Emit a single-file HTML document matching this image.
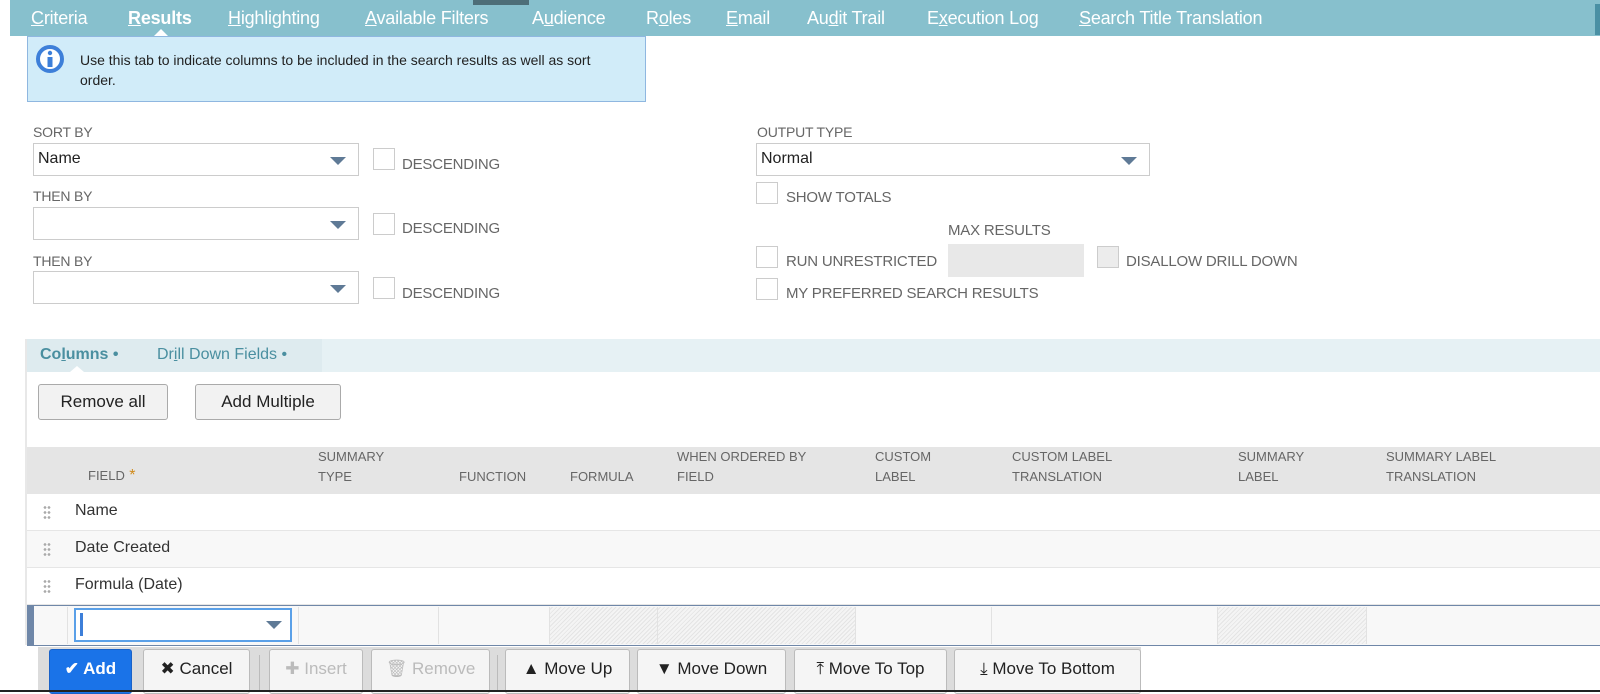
<!DOCTYPE html>
<html><head><meta charset="utf-8"><style>
*{box-sizing:border-box;margin:0;padding:0}
body{width:1600px;height:692px;overflow:hidden;background:#fff;font-family:"Liberation Sans",sans-serif;position:relative;color:#333}
.a{position:absolute}
.nav{left:10px;top:0;width:1590px;height:36px;background:#87c0cd}
.nav span{position:absolute;top:8px;font-size:18px;color:#fff;letter-spacing:-0.2px}
.nav u{text-decoration:underline}
.lbl{position:absolute;font-size:14px;color:#666;letter-spacing:-0.2px}
.sel{position:absolute;border:1px solid #ccc;background:#fff;height:33px;font-size:16px;color:#222;padding:6px 4px}
.tri{position:absolute;right:12px;top:13px;width:0;height:0;border-left:8px solid transparent;border-right:8px solid transparent;border-top:8px solid #5f7a96}
.cb{position:absolute;width:22px;height:22px;border:1px solid #ccc;background:#fff}
.btn{position:absolute;border:1px solid #aaa;border-radius:3px;background:#f2f2f2;font-size:17px;color:#222;text-align:center;line-height:33px}
.th{position:absolute;font-size:13px;color:#666;line-height:20px}
.row{position:absolute;left:27px;width:1573px;height:37px;border-bottom:1px solid #e6e6e6}
.row span{position:absolute;left:48px;top:8px;font-size:16px;color:#333}
.grip{position:absolute;left:16px;top:11px;width:8px;height:14px;background:radial-gradient(circle,#aaa 1.2px,transparent 1.5px) 0 0/4px 5px}
.tb{position:absolute;top:649px;height:45px;border:1px solid #bbb;border-radius:3px;background:#f5f5f5;font-size:17px;color:#222;line-height:38px;text-align:center}
.hatch{position:absolute;top:607px;height:37px;background:repeating-linear-gradient(135deg,#f4f4f4 0 2px,#e4e4e4 2px 3px)}
.vl{position:absolute;top:607px;height:37px;width:1px;background:#e2e2e2}
</style></head><body>
<div class="a nav">
<span style="left:21px"><u>C</u>riteria</span>
<span style="left:118px;font-weight:bold"><u>R</u>esults</span>
<span style="left:218px"><u>H</u>ighlighting</span>
<span style="left:355px"><u>A</u>vailable Filters</span>
<span style="left:522px">A<u>u</u>dience</span>
<span style="left:636px">R<u>o</u>les</span>
<span style="left:716px"><u>E</u>mail</span>
<span style="left:797px">Au<u>d</u>it Trail</span>
<span style="left:917px">E<u>x</u>ecution Log</span>
<span style="left:1069px"><u>S</u>earch Title Translation</span>
</div>
<div class="a" style="left:473px;top:0;width:56px;height:5px;background:#4d6e78"></div>
<div class="a" style="left:1595px;top:4px;width:5px;height:31px;background:#4a90a4"></div>
<div class="a" style="left:154px;top:29px;width:0;height:0;border-left:7px solid transparent;border-right:7px solid transparent;border-bottom:7px solid #fff"></div>
<div class="a" style="left:27px;top:36px;width:619px;height:66px;background:#d1ecf9;border:1px solid #8fb7e0"></div>
<svg class="a" style="left:36px;top:44px" width="28" height="30" viewBox="0 0 28 30"><circle cx="14" cy="15" r="12" fill="#fff" stroke="#3d7fd9" stroke-width="4"/><circle cx="14" cy="9" r="2.2" fill="#3d7fd9"/><rect x="11.5" y="13" width="5" height="10" fill="#3d7fd9"/></svg>
<div class="a" style="left:80px;top:50px;font-size:14px;line-height:20px;color:#222;width:545px">Use this tab to indicate columns to be included in the search results as well as sort order.</div>

<div class="lbl" style="left:33px;top:124px">SORT BY</div>
<div class="sel" style="left:33px;top:143px;width:326px">Name<div class="tri"></div></div>
<div class="cb" style="left:373px;top:148px"></div><div class="lbl" style="left:402px;top:156px;font-size:15px">DESCENDING</div>
<div class="lbl" style="left:33px;top:188px">THEN BY</div>
<div class="sel" style="left:33px;top:207px;width:326px"><div class="tri"></div></div>
<div class="cb" style="left:373px;top:213px"></div><div class="lbl" style="left:402px;top:220px;font-size:15px">DESCENDING</div>
<div class="lbl" style="left:33px;top:253px">THEN BY</div>
<div class="sel" style="left:33px;top:271px;width:326px"><div class="tri"></div></div>
<div class="cb" style="left:373px;top:277px"></div><div class="lbl" style="left:402px;top:285px;font-size:15px">DESCENDING</div>

<div class="lbl" style="left:757px;top:124px">OUTPUT TYPE</div>
<div class="sel" style="left:756px;top:143px;width:394px">Normal<div class="tri"></div></div>
<div class="cb" style="left:756px;top:182px"></div><div class="lbl" style="left:786px;top:189px;font-size:15px">SHOW TOTALS</div>
<div class="lbl" style="left:948px;top:222px;font-size:15px">MAX RESULTS</div>
<div class="cb" style="left:756px;top:246px"></div><div class="lbl" style="left:786px;top:253px;font-size:15px">RUN UNRESTRICTED</div>
<div class="a" style="left:948px;top:244px;width:136px;height:33px;background:#e8e8e8"></div>
<div class="cb" style="left:1097px;top:246px;background:#ececec"></div><div class="lbl" style="left:1126px;top:253px;font-size:15px">DISALLOW DRILL DOWN</div>
<div class="cb" style="left:756px;top:278px"></div><div class="lbl" style="left:786px;top:285px;font-size:15px">MY PREFERRED SEARCH RESULTS</div>

<div class="a" style="left:25px;top:339px;width:2px;height:306px;background:#e8e8e8"></div>
<div class="a" style="left:27px;top:339px;width:1573px;height:33px;background:#e6f1f4"></div>
<div class="a" style="left:27px;top:339px;width:295px;height:33px;background:#deebef"></div>
<div class="a" style="left:40px;top:346px;font-size:16px;font-weight:bold;color:#4a8fa0">Co<u>l</u>umns •</div>
<div class="a" style="left:157px;top:346px;font-size:16px;color:#4a8fa0">Dr<u>i</u>ll Down Fields •</div>
<div class="a" style="left:70px;top:366px;width:0;height:0;border-left:7px solid transparent;border-right:7px solid transparent;border-bottom:6px solid #fff"></div>
<div class="btn" style="left:38px;top:384px;width:130px;height:36px">Remove all</div>
<div class="btn" style="left:195px;top:384px;width:146px;height:36px">Add Multiple</div>

<div class="a" style="left:27px;top:447px;width:1573px;height:48px;background:#e5e5e5"></div>
<div class="th" style="left:88px;top:466px">FIELD<span style="color:#d08a1a;font-size:16px"> *</span></div>
<div class="th" style="left:318px;top:447px">SUMMARY<br>TYPE</div>
<div class="th" style="left:459px;top:467px">FUNCTION</div>
<div class="th" style="left:570px;top:467px">FORMULA</div>
<div class="th" style="left:677px;top:447px">WHEN ORDERED BY<br>FIELD</div>
<div class="th" style="left:875px;top:447px">CUSTOM<br>LABEL</div>
<div class="th" style="left:1012px;top:447px">CUSTOM LABEL<br>TRANSLATION</div>
<div class="th" style="left:1238px;top:447px">SUMMARY<br>LABEL</div>
<div class="th" style="left:1386px;top:447px">SUMMARY LABEL<br>TRANSLATION</div>

<div class="row" style="top:494px;background:#fff"><div class="grip"></div><span>Name</span></div>
<div class="row" style="top:531px;background:#f8f8f8"><div class="grip"></div><span>Date Created</span></div>
<div class="row" style="top:568px;background:#fff"><div class="grip"></div><span>Formula (Date)</span></div>

<div class="a" style="left:27px;top:605px;width:1573px;height:41px;background:#f8f8f8;border-top:1px solid #6f87a8;border-bottom:1px solid #6f87a8"></div>
<div class="a" style="left:27px;top:605px;width:7px;height:41px;background:#6f87a8"></div>
<div class="hatch" style="left:549px;width:108px"></div>
<div class="hatch" style="left:657px;width:198px"></div>
<div class="hatch" style="left:1217px;width:149px"></div>
<div class="vl" style="left:67px"></div><div class="vl" style="left:298px"></div><div class="vl" style="left:438px"></div><div class="vl" style="left:549px"></div><div class="vl" style="left:657px"></div><div class="vl" style="left:855px"></div><div class="vl" style="left:991px"></div><div class="vl" style="left:1217px"></div><div class="vl" style="left:1366px"></div>
<div class="a" style="left:74px;top:608px;width:218px;height:34px;background:#fff;border:2px solid #5aa0e8"></div>
<div class="a" style="left:80px;top:613px;width:3px;height:23px;background:#3d7fd9"></div>
<div class="a" style="left:266px;top:621px;width:0;height:0;border-left:8px solid transparent;border-right:8px solid transparent;border-top:8px solid #5f7a96"></div>

<div class="a" style="left:38px;top:647px;width:1103px;height:45px;background:#dcdcdc"></div>
<div class="tb" style="left:49px;width:83px;background:#1a73e8;border-color:#1a62c8;color:#fff;font-weight:bold">✔ Add</div>
<div class="tb" style="left:143px;width:107px">✖ Cancel</div>
<div class="a" style="left:259px;top:655px;width:1px;height:37px;background:#bbb"></div>
<div class="tb" style="left:269px;width:94px;color:#bbb">✚ Insert</div>
<div class="tb" style="left:371px;width:119px;color:#bbb">🗑 Remove</div>
<div class="a" style="left:497px;top:655px;width:1px;height:37px;background:#bbb"></div>
<div class="tb" style="left:505px;width:125px">▲ Move Up</div>
<div class="tb" style="left:637px;width:149px">▼ Move Down</div>
<div class="tb" style="left:794px;width:153px">⤒ Move To Top</div>
<div class="tb" style="left:954px;width:187px">⤓ Move To Bottom</div>
<div class="a" style="left:0;top:690px;width:1600px;height:2px;background:#222"></div>
</body></html>
